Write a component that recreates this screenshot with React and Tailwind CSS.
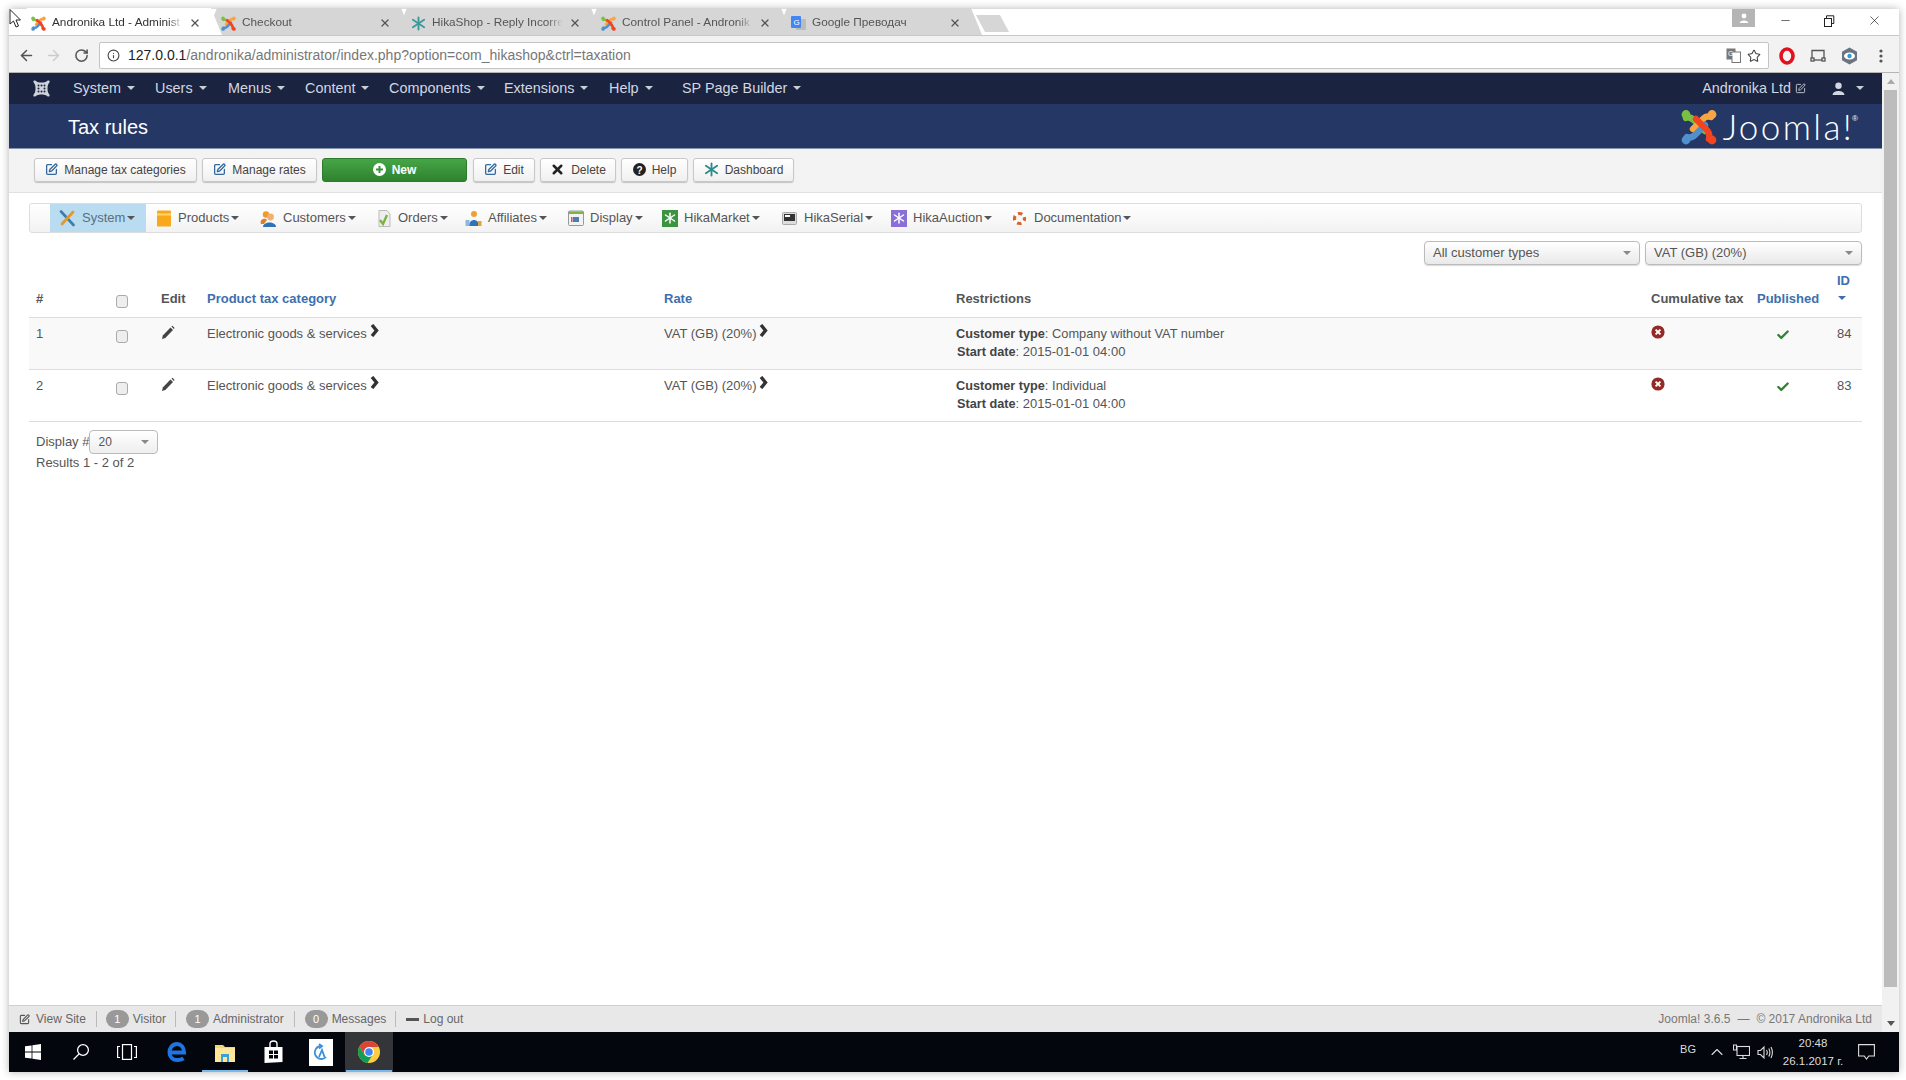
import React from "react";
import { ArrowLeft, ArrowRight, RotateCw, Info, Star, Minus, X, SquarePen, ChevronUp, Check } from "lucide-react";

const Caret = ({ className = "" }) => (
  <span className={`inline-block w-0 h-0 border-x-[4px] border-x-transparent border-t-[4px] ${className}`} />
);

const JoomlaLogo = ({ size = 36 }) => (
  <svg width={size} height={size} viewBox="0 0 36 36" className="shrink-0">
    <g fill="none" strokeWidth="6.4" strokeLinecap="round">
      <path d="M5 9 C9 7 12 10 15 13 L24 22" stroke="#7ac143" />
      <path d="M12 20 L22 10 C24 8 27 7 30 8" stroke="#f9a541" />
      <path d="M24 16 L14 26 C12 28 9 29 6 28" stroke="#5091cd" />
      <path d="M15 10 L25 20 C28 23 29 26 28 30" stroke="#f44321" />
    </g>
    <circle cx="5" cy="5.5" r="4.4" fill="#7ac143" />
    <circle cx="31" cy="5.5" r="4.4" fill="#f9a541" />
    <circle cx="31" cy="31" r="4.4" fill="#f44321" />
    <circle cx="5" cy="31" r="4.4" fill="#5091cd" />
  </svg>
);

const Spark = ({ size = 16, color = "#3d9a9a", width = 2 }) => (
  <svg width={size} height={size} viewBox="0 0 16 16" className="shrink-0">
    <g stroke={color} strokeWidth={width} strokeLinecap="round">
      <path d="M8 1.5V14.5" />
      <path d="M2 4L14 12" />
      <path d="M14 4L2 12" />
    </g>
  </svg>
);

const Tab = ({ icon, label, active, first }) => (
  <div
    className={`relative h-[27px] w-[206px] flex items-center pl-[15px] pr-[14px] pt-[3px] [clip-path:polygon(11px_0,195px_0,206px_100%,0_100%)] ${first ? "" : "-ml-[16px]"} ${active ? "bg-white z-10" : "bg-[#d6d6d6]"}`}
  >
    {icon}
    <span className={`ml-[6px] w-[131px] whitespace-nowrap overflow-hidden text-[11.8px] [mask-image:linear-gradient(to_right,black_88%,transparent)] ${active ? "text-[#333]" : "text-[#555]"}`}>{label}</span>
    <X size={12} strokeWidth={2.6} className="ml-auto mr-[7px] text-[#555]" />
  </div>
);

const Btn = ({ w, icon, children, cls = "" }) => (
  <div className={`${w} ${cls} h-[24px] flex items-center justify-center gap-[6px] rounded-[3px] border border-[#c8c8c8] bg-gradient-to-b from-white to-[#f0f0f0] shadow-[0_1px_1px_rgba(0,0,0,0.2)] text-[12px] text-[#444]`}>
    {icon}
    {children}
  </div>
);

const Menu = ({ w, icon, label, active }) => (
  <div className={`${w} h-full flex items-center pl-[9px] text-[13px] ${active ? "bg-[#b9dcf0] text-[#5a6f80]" : "text-[#555]"}`}>
    <span className="w-[17px] h-[17px] flex items-center justify-center shrink-0">{icon}</span>
    <span className="ml-[6px] whitespace-nowrap">{label}</span>
    <Caret className="ml-[2px] border-t-[#555]" />
  </div>
);

const Cb = () => <div className="w-[12px] h-[13px] rounded-[3px] border border-[#aaa] bg-[#eee]" />;

const Chevron = () => (
  <svg width="9" height="13" viewBox="0 0 9 13" className="ml-[3px] -mt-[1px] shrink-0">
    <path d="M2 1L6.5 6.5L2 12" fill="none" stroke="#333" strokeWidth="3.4" />
  </svg>
);

const Pencil = () => (
  <svg width="14" height="15" viewBox="0 0 14 15">
    <path d="M1 14L1.8 10.5L9.5 2.5L12 5L4.3 13Z" fill="#444" />
    <path d="M10.5 1.5L11.5 0.7L13.6 3L12.8 4Z" fill="#444" />
  </svg>
);

const Cross = () => (
  <svg width="14" height="14" viewBox="0 0 14 14">
    <circle cx="7" cy="7" r="6.6" fill="#942a25" />
    <path d="M4.6 4.6L9.4 9.4M9.4 4.6L4.6 9.4" stroke="#fff" strokeWidth="2" />
  </svg>
);

const ROW = "grid grid-cols-[83px_43px_45px_457px_292px_695px_106px_80px_32px] text-[13px] text-[#555]";

const Row = ({ n, type, id, striped }) => (
  <div className={`${ROW} h-[52px] border-b border-[#ddd] pt-[7px] leading-[18px] ${striped ? "bg-[#f9f9f9]" : ""}`}>
    <div className="pl-[7px]">{n}</div>
    <div className="pl-[4px] pt-[5px]"><Cb /></div>
    <div className="pl-[6px]"><Pencil /></div>
    <div className="pl-[7px] flex items-start"><span>Electronic goods &amp; services</span><Chevron /></div>
    <div className="pl-[7px] flex items-start"><span>VAT (GB) (20%)</span><Chevron /></div>
    <div className="pl-[7px]">
      <div><b className="font-bold text-[12.7px] text-[#444]">Customer type</b>: <span className="text-[12.8px]">{type}</span></div>
      <div className="pl-[1px]"><b className="font-bold text-[12.7px] text-[#444]">Start date</b>: 2015-01-01 04:00</div>
    </div>
    <div className="pl-[7px]"><Cross /></div>
    <div className="pl-[26px] pt-[3px]"><Check size={14} strokeWidth={4} className="text-[#378137]" /></div>
    <div className="pl-[7px]">{id}</div>
  </div>
);

const Select = ({ w, label }) => (
  <div className={`${w} h-[24px] flex items-center pl-[8px] pr-[8px] rounded-[4px] border border-[#bbb] bg-gradient-to-b from-white to-[#e9e9e9] text-[13px] text-[#555] shadow-[0_1px_1px_rgba(0,0,0,0.15)]`}>
    {label}
    <Caret className="ml-auto border-t-[#888]" />
  </div>
);

const Badge = ({ n, cls }) => (
  <span className={`w-[23px] h-[18px] rounded-full bg-[#999] text-white text-[11px] flex items-center justify-center ${cls}`}>{n}</span>
);
const Sep = () => <span className="block w-px h-[16px] bg-[#bbb]" />;

const TaskItem = ({ children, active, underline }) => (
  <div className={`relative w-[48px] h-full flex items-center justify-center ${active ? "bg-[#333538]" : ""}`}>
    {children}
    {underline && <span className="absolute left-[1px] right-[1px] bottom-0 h-[2px] bg-[#76b9ed]" />}
  </div>
);

export default function App() {
  return (
    <div className="h-screen w-full bg-white pt-[9px] pb-[8px] pl-[9px] pr-[7px] font-['Liberation_Sans',Arial,sans-serif] overflow-hidden">
      <div className="relative h-full flex flex-col bg-white shadow-[0_0_8px_rgba(0,0,0,0.3)]">
        {/* cursor */}
        <svg width="14" height="20" viewBox="0 0 14 20" className="absolute left-0 top-0 z-20">
          <path d="M1 0.5V15L4.5 12L7 18L9.5 17L7 11H11.5Z" fill="#fff" stroke="#222" strokeWidth="1" />
        </svg>

        {/* Tab strip */}
        <div className="h-[27px] flex items-end bg-white pl-[7px] border-b border-[#c8c8c8] shrink-0">
          <Tab first active icon={<JoomlaLogo size={15} />} label="Andronika Ltd - Administ" />
          <Tab icon={<JoomlaLogo size={15} />} label="Checkout" />
          <Tab icon={<Spark size={15} />} label="HikaShop - Reply Incorre" />
          <Tab icon={<JoomlaLogo size={15} />} label="Control Panel - Andronik" />
          <Tab
            icon={
              <svg width="15" height="15" viewBox="0 0 15 15" className="shrink-0">
                <rect x="5" y="3" width="10" height="11" fill="#bbb" />
                <rect x="0" y="0" width="10" height="12" rx="1" fill="#4285f4" />
                <text x="2.5" y="9" fontSize="8" fill="#fff" fontFamily="Liberation Sans">G</text>
              </svg>
            }
            label="Google Преводач"
          />
          <div className="-ml-[6px] mb-[3px] w-[33px] h-[17px] bg-[#d6d6d6] [clip-path:polygon(0_0,24px_0,100%_100%,9px_100%)]" />
          <div className="ml-auto self-start flex items-start h-full">
            <div className="w-[23px] h-[18px] bg-[#b5b5b5] flex items-center justify-center">
              <svg width="10" height="10" viewBox="0 0 10 10"><circle cx="5" cy="3" r="2.4" fill="#fff" /><path d="M0.5 10C1 6.5 9 6.5 9.5 10Z" fill="#fff" /></svg>
            </div>
            <div className="w-[144px] h-full flex items-center pb-[3px] text-[#222]">
              <Minus size={13} strokeWidth={1.2} className="ml-[24px]" />
              <svg width="12" height="12" viewBox="0 0 12 12" className="ml-[31px]" fill="none" stroke="#222"><rect x="1.5" y="3.5" width="7" height="8" /><path d="M3.5 3.5V0.8H10.8V8.5H8.5" /></svg>
              <X size={15} strokeWidth={1.1} className="ml-[32px]" />
            </div>
          </div>
        </div>

        {/* Address toolbar */}
        <div className="h-[37px] flex items-center bg-[#f2f2f2] border-b border-[#b5b5b5] shrink-0 pt-[3px]">
          <ArrowLeft size={17} strokeWidth={2.2} className="ml-[9px] text-[#555]" />
          <ArrowRight size={17} strokeWidth={2} className="ml-[10px] text-[#ccc]" />
          <RotateCw size={15} strokeWidth={2.4} className="ml-[12px] text-[#555]" />
          <div className="ml-[10px] w-[1670px] h-[27px] flex items-center bg-white border border-[#c4c4c4] rounded-[2px] text-[14px] shrink-0">
            <Info size={13} strokeWidth={2} className="ml-[7px] text-[#444]" />
            <span className="ml-[8px] text-[#222]">127.0.0.1</span>
            <span className="text-[#777]">/andronika/administrator/index.php?option=com_hikashop&amp;ctrl=taxation</span>
            <svg width="15" height="15" viewBox="0 0 15 15" className="ml-auto">
              <rect x="0.5" y="0.5" width="9" height="11" fill="#777" />
              <rect x="6" y="4" width="8.5" height="10.5" fill="#fff" stroke="#777" />
              <text x="2" y="8" fontSize="7" fill="#fff" fontFamily="Liberation Sans">G</text>
            </svg>
            <Star size={14} strokeWidth={1.8} className="ml-[6px] mr-[7px] text-[#444]" />
          </div>
          <svg width="16" height="18" viewBox="0 0 16 18" className="ml-[10px]">
            <ellipse cx="8" cy="9" rx="6" ry="7" fill="none" stroke="#e0121f" strokeWidth="3.6" />
          </svg>
          <svg width="16" height="14" viewBox="0 0 16 14" className="ml-[15px]" fill="none" stroke="#555" strokeWidth="1.3">
            <path d="M2 9V1.5H14V9" /><rect x="1" y="9" width="3" height="3" /><rect x="12" y="9" width="3" height="3" /><path d="M4 11H12" />
          </svg>
          <svg width="17" height="18" viewBox="0 0 17 18" className="ml-[15px]">
            <path d="M8.5 0.5L16 4.7V13.3L8.5 17.5L1 13.3V4.7Z" fill="#6b7480" />
            <ellipse cx="8.5" cy="9" rx="5.5" ry="3.5" fill="#fff" />
            <circle cx="8.5" cy="9" r="2.2" fill="#2e9bd6" />
          </svg>
          <svg width="4" height="14" viewBox="0 0 4 14" className="ml-[21px]" fill="#555">
            <circle cx="2" cy="2" r="1.6" /><circle cx="2" cy="7" r="1.6" /><circle cx="2" cy="12" r="1.6" />
          </svg>
        </div>

        {/* Body + scrollbar */}
        <div className="flex-1 min-h-0 flex">
          <div className="flex-1 min-w-0 flex flex-col">
            {/* Joomla nav */}
            <div className="h-[31px] flex items-center bg-[#1a2340] text-[14.4px] text-[#d3d7e0] shrink-0">
              <span className="w-[64px] flex justify-center pl-[1px]">
                <svg width="17" height="17" viewBox="0 0 17 17">
                  <path d="M3 1C5 3 12 3 14 1C16.5 0 17.5 1 16 3C14 5 14 12 16 14C17.5 16 16 17.5 14 16C12 14 5 14 3 16C1 17.5-0.5 16 1 14C3 12 3 5 1 3C-0.5 1 1 0 3 1Z" fill="#cfd3dc" />
                  <g fill="#1a2340">
                    <circle cx="5.5" cy="5.5" r="1" /><circle cx="8.5" cy="5.5" r="1" /><circle cx="11.5" cy="5.5" r="1" />
                    <circle cx="5.5" cy="8.5" r="1" /><circle cx="11.5" cy="8.5" r="1" />
                    <circle cx="5.5" cy="11.5" r="1" /><circle cx="8.5" cy="11.5" r="1" /><circle cx="11.5" cy="11.5" r="1" />
                  </g>
                </svg>
              </span>
              {[
                ["System", "w-[82px]"],
                ["Users", "w-[73px]"],
                ["Menus", "w-[77px]"],
                ["Content", "w-[84px]"],
                ["Components", "w-[115px]"],
                ["Extensions", "w-[105px]"],
                ["Help", "w-[73px]"],
                ["SP Page Builder", "w-[140px]"],
              ].map(([l, w]) => (
                <span key={l} className={`${w} flex items-center whitespace-nowrap`}>
                  {l}
                  <Caret className="ml-[6px] border-t-[#c9ced8]" />
                </span>
              ))}
              <span className="ml-auto flex items-center text-[#d3d7e0]">
                Andronika Ltd
                <SquarePen size={11} strokeWidth={2} className="ml-[4px] text-[#c9ced8]" />
                <svg width="13" height="13" viewBox="0 0 13 13" className="ml-[26px]" fill="#d3d7e0"><circle cx="6.5" cy="3.8" r="3.2" /><path d="M0.5 13C1 7.5 12 7.5 12.5 13Z" /></svg>
                <Caret className="ml-[11px] mr-[18px] border-t-[#c9ced8]" />
              </span>
            </div>

            {/* Title header */}
            <div className="h-[45px] flex items-center bg-[#253765] border-b border-[#8894ad] shrink-0 pl-[59px] pr-[24px] pt-[1px]">
              <span className="text-[20px] text-white">Tax rules</span>
              <span className="ml-auto flex items-center">
                <JoomlaLogo size={36} />
                <span className="ml-[6px] font-['Lato',sans-serif] font-light text-[35px] leading-none text-white tracking-[2.4px]">Joomla!</span>
                <span className="text-[8px] text-white -mt-[16px] -ml-[2px]">®</span>
              </span>
            </div>

            {/* Button toolbar */}
            <div className="h-[44px] flex items-center gap-[5px] bg-[#f3f3f3] border-b border-[#e0e0e0] pl-[25px] pb-[2px] shrink-0">
              <Btn w="w-[163px]" icon={<SquarePen size={13} strokeWidth={2.4} className="text-[#346a9e]" />}>Manage tax categories</Btn>
              <Btn w="w-[115px]" icon={<SquarePen size={13} strokeWidth={2.4} className="text-[#346a9e]" />}>Manage rates</Btn>
              <div className="w-[145px] h-[24px] flex items-center justify-center gap-[6px] rounded-[3px] border border-[#2c7a2c] bg-gradient-to-b from-[#46a546] to-[#2f832f] text-[12px] text-white font-bold">
                <svg width="13" height="13" viewBox="0 0 13 13"><circle cx="6.5" cy="6.5" r="6.5" fill="#fff" /><path d="M6.5 3V10M3 6.5H10" stroke="#3a923a" strokeWidth="2" /></svg>
                New
              </div>
              <Btn w="w-[62px]" cls="ml-[1px]" icon={<SquarePen size={13} strokeWidth={2.4} className="text-[#346a9e]" />}>Edit</Btn>
              <Btn w="w-[76px]" icon={<X size={15} strokeWidth={4} className="text-[#222]" />}>Delete</Btn>
              <Btn w="w-[67px]" icon={
                <svg width="13" height="13" viewBox="0 0 13 13"><circle cx="6.5" cy="6.5" r="6.5" fill="#222" /><text x="3.6" y="10.5" fontSize="10" fontWeight="bold" fill="#fff" fontFamily="Liberation Sans">?</text></svg>
              }>Help</Btn>
              <Btn w="w-[101px]" icon={<Spark size={15} color="#2f8a8a" />}>Dashboard</Btn>
            </div>

            {/* Content */}
            <div className="flex-1 min-h-0 bg-white px-[20px] pt-[10px]">
              <div className="h-[30px] flex items-center rounded-[3px] border border-[#ddd] bg-gradient-to-b from-white to-[#f2f2f2] pl-[20px]">
                <Menu active w="w-[96px]" label="System" icon={
                  <svg width="17" height="17" viewBox="0 0 17 17" fill="none" strokeLinecap="round">
                    <path d="M2 1.5L14.5 15" stroke="#3f7ea8" strokeWidth="2.6" />
                    <path d="M14 2L3 14" stroke="#e4992a" strokeWidth="2.8" />
                  </svg>
                } />
                <Menu w="w-[105px]" label="Products" icon={
                  <svg width="16" height="17" viewBox="0 0 16 17"><rect x="1" y="0.5" width="14" height="16" rx="1" fill="#f7a81b" /><rect x="1" y="3.5" width="14" height="2" fill="#ffd76a" /></svg>
                } />
                <Menu w="w-[115px]" label="Customers" icon={
                  <svg width="17" height="17" viewBox="0 0 17 17"><circle cx="6" cy="4.5" r="3.2" fill="#f09a2a" /><circle cx="10.5" cy="7" r="3.4" fill="#f0b070" /><path d="M3 17C3 11 16 11 16 17Z" fill="#2f73b5" /><path d="M0.5 12C1 8 6 8 7 10L4 14H1Z" fill="#d9822b" /></svg>
                } />
                <Menu w="w-[90px]" label="Orders" icon={
                  <svg width="16" height="17" viewBox="0 0 16 17"><path d="M3 0.5H11L14 4V16.5H3Z" fill="#eee" stroke="#bbb" /><path d="M4 10L7 14L11 5" fill="none" stroke="#7cb342" strokeWidth="2.4" /></svg>
                } />
                <Menu w="w-[102px]" label="Affiliates" icon={
                  <svg width="17" height="17" viewBox="0 0 17 17"><circle cx="9" cy="4" r="3" fill="#f0a030" /><path d="M4 16C4 8 14 8 14 16Z" fill="#2f73b5" /><rect x="0.5" y="10" width="4" height="6" fill="#8bb8dd" /><rect x="13" y="11" width="3.5" height="5" fill="#e4a33a" /></svg>
                } />
                <Menu w="w-[94px]" label="Display" icon={
                  <svg width="16" height="16" viewBox="0 0 16 16"><rect x="0.5" y="1" width="15" height="14.5" rx="1" fill="#f2f2f2" stroke="#999" /><rect x="1" y="1.5" width="14" height="2.5" fill="#7cb342" /><rect x="5" y="7" width="6" height="5" fill="#4a7fb5" /><rect x="3" y="7" width="1.5" height="5" fill="#d9534f" /></svg>
                } />
                <Menu w="w-[120px]" label="HikaMarket" icon={
                  <span className="w-[16px] h-[17px] bg-[#3d9440] flex items-center justify-center"><Spark size={12} color="#fff" /></span>
                } />
                <Menu w="w-[109px]" label="HikaSerial" icon={
                  <svg width="15" height="13" viewBox="0 0 15 13"><rect x="0.5" y="0.5" width="14" height="12" rx="1" fill="#ddd" stroke="#aaa" /><rect x="2" y="2" width="11" height="7" fill="#333" /><rect x="3" y="3" width="5" height="2" fill="#fff" /></svg>
                } />
                <Menu w="w-[121px]" label="HikaAuction" icon={
                  <span className="w-[16px] h-[17px] bg-[#8a70d6] flex items-center justify-center"><Spark size={12} color="#fff" /></span>
                } />
                <Menu w="w-[130px]" label="Documentation" icon={
                  <svg width="15" height="15" viewBox="0 0 15 15" fill="none"><circle cx="7.5" cy="7.5" r="5" stroke="#fff" strokeWidth="3.2" /><circle cx="7.5" cy="7.5" r="5" stroke="#d9652b" strokeWidth="3.2" strokeDasharray="4.5 3.35" strokeDashoffset="2.2" /></svg>
                } />
              </div>

              <div className="flex justify-end gap-[5px] pt-[8px]">
                <Select w="w-[216px]" label="All customer types" />
                <Select w="w-[217px]" label="VAT (GB) (20%)" />
              </div>

              <div className={`${ROW} h-[53px] items-end border-b border-[#ddd] pb-[9px] font-bold text-[12.7px] text-[#444] leading-[18px]`}>
                <div className="pl-[7px]">#</div>
                <div className="pl-[4px]"><Cb /></div>
                <div className="pl-[6px]">Edit</div>
                <div className="pl-[7px] text-[#3d6fae]">Product tax category</div>
                <div className="pl-[7px] text-[#3d6fae]">Rate</div>
                <div className="pl-[7px]">Restrictions</div>
                <div className="pl-[7px] whitespace-nowrap">Cumulative tax</div>
                <div className="pl-[7px] text-[#3d6fae]">Published</div>
                <div className="pl-[7px] text-[#3d6fae]">
                  <div>ID</div>
                  <Caret className="block ml-[1px] mb-[3px] border-t-[#3d6fae]" />
                </div>
              </div>
              <Row n="1" type="Company without VAT number" id="84" striped />
              <Row n="2" type="Individual" id="83" />

              <div className="h-[24px] mt-[8px] flex items-center pl-[7px] text-[13px] text-[#555]">
                <span>Display #</span>
                <div className="w-[69px] h-[24px] ml-0 flex items-center pl-[8px] pr-[8px] rounded-[4px] border border-[#bbb] bg-gradient-to-b from-white to-[#eee] text-[12px]">
                  20
                  <Caret className="ml-auto border-t-[#888]" />
                </div>
              </div>
              <div className="pl-[7px] text-[13px] leading-[18px] text-[#555]">Results 1 - 2 of 2</div>
            </div>

            {/* Status footer */}
            <div className="h-[27px] flex items-center bg-[#e8e8e8] border-t border-[#d0d0d0] text-[12px] text-[#666] pl-[10px] pr-[10px] shrink-0 whitespace-nowrap">
              <SquarePen size={11} strokeWidth={2.4} className="text-[#555]" />
              <span className="ml-[6px]">View Site</span>
              <span className="ml-[10px]"><Sep /></span>
              <Badge n="1" cls="ml-[9px]" />
              <span className="ml-[4px]">Visitor</span>
              <span className="ml-[9px]"><Sep /></span>
              <Badge n="1" cls="ml-[10px]" />
              <span className="ml-[4px]">Administrator</span>
              <span className="ml-[10px]"><Sep /></span>
              <Badge n="0" cls="ml-[10px]" />
              <span className="ml-[4px]">Messages</span>
              <span className="ml-[9px]"><Sep /></span>
              <span className="ml-[10px] w-[13px] h-[3px] bg-[#555]" />
              <span className="ml-[4px]">Log out</span>
              <span className="ml-auto text-[12px] text-[#777]">Joomla! 3.6.5<span className="mx-[7px]">—</span>© 2017 Andronika Ltd</span>
            </div>
          </div>

          {/* Scrollbar */}
          <div className="w-[17px] flex flex-col items-center bg-[#f1f1f1] shrink-0 h-full">
            <span className="mt-[6px] w-0 h-0 border-x-[4px] border-x-transparent border-b-[5px] border-b-[#aaa]" />
            <div className="mt-[6px] w-[13px] h-[897px] bg-[#bcbcbc]" />
            <span className="mt-auto mb-[6px] w-0 h-0 border-x-[4px] border-x-transparent border-t-[5px] border-t-[#555]" />
          </div>
        </div>

        {/* Windows taskbar */}
        <div className="h-[40px] flex items-center bg-[#03060d] text-[#ddd] shrink-0">
          <TaskItem>
            <svg width="16" height="16" viewBox="0 0 16 16" fill="#fff"><path d="M0 2.3L6.6 1.4V7.6H0ZM7.4 1.3L16 0V7.6H7.4ZM0 8.4H6.6V14.6L0 13.7ZM7.4 8.4H16V16L7.4 14.7Z" /></svg>
          </TaskItem>
          <TaskItem>
            <svg width="18" height="18" viewBox="0 0 18 18" fill="none" stroke="#fff" strokeWidth="1.3"><circle cx="11" cy="7" r="5.4" /><path d="M7 11L1.5 16.5" /></svg>
          </TaskItem>
          <TaskItem>
            <svg width="20" height="16" viewBox="0 0 20 16" fill="none" stroke="#fff" strokeWidth="1.2" className="-ml-[4px]"><rect x="5.5" y="0.6" width="9" height="14.8" /><path d="M3 2.5H0.6V13.5H3M17 2.5H19.4V13.5H17" /></svg>
          </TaskItem>
          <TaskItem>
            <svg width="20" height="22" viewBox="0 0 20 22" fill="none"><path d="M2.5 11.5H17C17 6 14 3 10 3C5.5 3 2.5 7 2.5 11.5C2.5 16 6 19 10.5 19C13 19 15 18.4 16.5 17.4" stroke="#1f74e0" strokeWidth="4" /></svg>
          </TaskItem>
          <TaskItem underline>
            <svg width="22" height="21" viewBox="0 0 22 21"><path d="M1 3H9L11 5H21V20H1Z" fill="#f2d575" /><rect x="1" y="6" width="20" height="14" fill="#ffe79a" /><rect x="7" y="12" width="8" height="8" fill="#3aa0e0" /><rect x="9" y="15" width="4" height="5" fill="#ffe79a" /></svg>
          </TaskItem>
          <TaskItem>
            <svg width="21" height="24" viewBox="0 0 21 24"><path d="M7 7V4C7 0 14 0 14 4V7" fill="none" stroke="#fff" strokeWidth="1.4" /><path d="M1.5 7H19.5V22L1.5 23Z" fill="#fff" /><path d="M6 10.5H10V14H6ZM11 10.5H15V14H11ZM6 15H10V18.5H6ZM11 15H15V18.5H11Z" fill="#03060d" /></svg>
          </TaskItem>
          <TaskItem>
            <div className="w-[24px] h-[27px] bg-white flex items-center justify-center">
              <svg width="16" height="19" viewBox="0 0 16 19" fill="none" stroke="#3d8fd8" strokeWidth="1.8"><path d="M13 14A6.5 6.5 0 1 1 8 3" /><path d="M6 1L9 3L6 5.5" /><path d="M6 14L9 7L11.5 14" /></svg>
            </div>
          </TaskItem>
          <TaskItem active underline>
            <svg width="22" height="22" viewBox="0 0 22 22">
              <circle cx="11" cy="11" r="11" fill="#ffcd40" />
              <path d="M11 0A11 11 0 0 0 1.5 5.5L6.5 14L11 6H20.5A11 11 0 0 0 11 0Z" fill="#db4437" />
              <path d="M1.5 5.5A11 11 0 0 0 9.5 21.9L14.5 14L6.5 14Z" fill="#0f9d58" />
              <circle cx="11" cy="11" r="5" fill="#fff" />
              <circle cx="11" cy="11" r="3.8" fill="#4285f4" />
            </svg>
          </TaskItem>
          <div className="ml-auto flex items-center h-full text-[12px]">
            <span className="mb-[5px] text-[11px]">BG</span>
            <ChevronUp size={20} strokeWidth={1.3} className="ml-[11px]" />
            <svg width="17" height="16" viewBox="0 0 17 16" className="ml-[6px]" fill="none" stroke="#ddd" strokeWidth="1.1"><rect x="4" y="2.5" width="12.5" height="9" /><path d="M10 11.5V14.5M6.5 14.5H13.5" /><path d="M0.5 1H3.5V6H0.5Z" /></svg>
            <svg width="17" height="15" viewBox="0 0 17 15" className="ml-[7px]" fill="none" stroke="#ddd" strokeWidth="1.1"><path d="M1 5.5H3.5L7 2V13L3.5 9.5H1Z" /><path d="M9.5 5Q11 7.5 9.5 10M11.8 3.5Q14 7.5 11.8 11.5M14 2Q16.8 7.5 14 13" /></svg>
            <div className="ml-[8px] w-[62px] text-center text-[11.5px] leading-[18px]">
              <div>20:48</div>
              <div className="whitespace-nowrap">26.1.2017 г.</div>
            </div>
            <svg width="17" height="16" viewBox="0 0 17 16" className="ml-[14px] mr-[24px]" fill="none" stroke="#ddd" strokeWidth="1.1"><path d="M0.6 0.6H16.4V12H10.8L8.5 15L6.2 12H0.6Z" /></svg>
          </div>
        </div>
      </div>
    </div>
  );
}
